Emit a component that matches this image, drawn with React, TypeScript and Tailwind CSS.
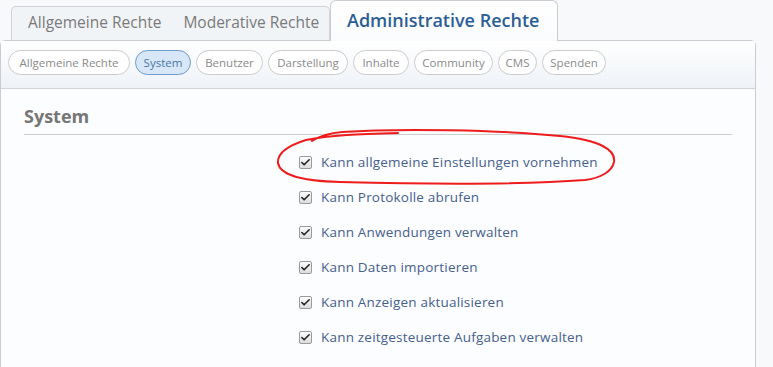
import { Check } from 'lucide-react'

const subTabs = [
  { label: 'Allgemeine Rechte', w: 'w-[122px]' },
  { label: 'System', w: 'w-[56px]' },
  { label: 'Benutzer', w: 'w-[67px]' },
  { label: 'Darstellung', w: 'w-[80px]' },
  { label: 'Inhalte', w: 'w-[56px]' },
  { label: 'Community', w: 'w-[79px]' },
  { label: 'CMS', w: 'w-[39px]' },
  { label: 'Spenden', w: 'w-[64px]' },
]

const permissions = [
  'Kann allgemeine Einstellungen vornehmen',
  'Kann Protokolle abrufen',
  'Kann Anwendungen verwalten',
  'Kann Daten importieren',
  'Kann Anzeigen aktualisieren',
  'Kann zeitgesteuerte Aufgaben verwalten',
]

function CheckBox() {
  return (
    <span className="flex h-[13px] w-[13px] items-center justify-center rounded-[2px] border border-[#9a9a9a] bg-gradient-to-b from-[#fdfdfd] to-[#dcdcdc]">
      <Check size={11} strokeWidth={3.5} className="text-[#222]" />
    </span>
  )
}

export default function App() {
  return (
    <div className="relative h-[367px] w-[773px] overflow-hidden bg-[#f7f9fb] font-['Open_Sans',sans-serif]">
      {/* main tabs */}
      <div className="flex h-[40px] items-end">
        <div className="ml-[11px] flex h-[34px] w-[319px] items-start gap-[22px] rounded-t-[5px] border border-b-0 border-[#cfd3d8] bg-[#f1f4f7] pl-[16px] pt-[4px] text-[15.5px] text-[#7a7a7a]">
          <span>Allgemeine Rechte</span>
          <span>Moderative Rechte</span>
        </div>
        <div className="relative z-10 -mb-px flex h-[41px] w-[228px] items-start rounded-t-[6px] border border-b-0 border-[#c9cdd2] bg-gradient-to-b from-white to-[#fafbfd] pl-[16px] pt-[6px] text-[18px] font-semibold text-[#2c5e96]">
          Administrative Rechte
        </div>
      </div>

      {/* panel */}
      <div className="w-[756px] rounded-t-[5px] border border-[#c9cdd2] bg-[#fcfdfe]">
        <div className="flex h-[48px] items-start gap-[5px] border-b border-[#cfd3d8] bg-gradient-to-b from-white to-[#eef2f7] pl-[7px] pt-[9px]">
          {subTabs.map((t) => (
            <span
              key={t.label}
              className={
                t.label === 'System'
                  ? `flex h-[25px] shrink-0 ${t.w} items-center justify-center rounded-full border border-[#6d9bcc] bg-[#d8e7f7] text-[11.5px] text-[#4a76a6]`
                  : `flex h-[25px] shrink-0 ${t.w} items-center justify-center rounded-full border border-[#cccccc] bg-white text-[11.5px] text-[#8a8a8a]`
              }
            >
              {t.label}
            </span>
          ))}
        </div>

        <div className="h-[300px] px-[23px] pt-[14px]">
          <h2 className="border-b border-[#cccccc] pb-[4px] text-[18px] font-bold text-[#767676]">System</h2>
          <ul className="flex flex-col gap-[13px] pl-[275px] pt-[16px]">
            {permissions.map((p) => (
              <li key={p} className="flex h-[22px] items-center gap-[9px] text-[13.5px] tracking-[0.2px] text-[#45608f]">
                <CheckBox />
                <span>{p}</span>
              </li>
            ))}
          </ul>
        </div>
      </div>

      {/* hand drawn highlight */}
      <svg className="pointer-events-none absolute left-0 top-0" width="773" height="367">
        <path
          d="M 312 141 C 320 136, 330 133, 342 132 C 400 128, 500 130, 560 136 C 600 140, 616 150, 614 162 C 612 172, 600 178, 585 180 C 520 185, 420 184, 340 182 C 300 181, 280 175, 278 163 C 277 152, 290 145, 306 140 C 330 135, 360 134, 398 133"
          fill="none"
          stroke="#ee1c1c"
          strokeWidth="2"
          strokeLinecap="round"
        />
      </svg>
    </div>
  )
}
